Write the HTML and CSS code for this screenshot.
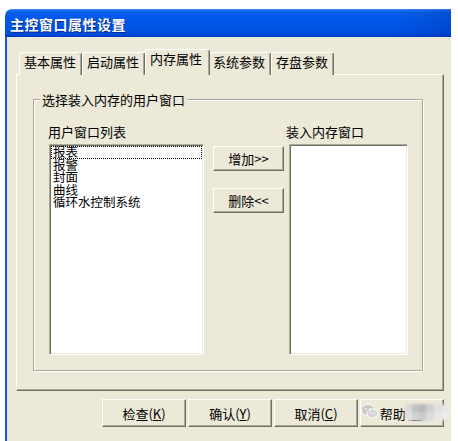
FILE: index.html
```html
<!DOCTYPE html>
<html lang="zh-CN">
<head>
<meta charset="utf-8">
<title>主控窗口属性设置</title>
<link rel="stylesheet" href="styles.css">
</head>
<body>
<div class="window">
  <div class="titlebar"><span class="title">主控窗口属性设置</span></div>
  <div class="client">
    <div class="tabs">
      <div class="tab">基本属性</div>
      <div class="tab">启动属性</div>
      <div class="tab active">内存属性</div>
      <div class="tab">系统参数</div>
      <div class="tab">存盘参数</div>
    </div>
    <div class="panel">
      <div class="group">
        <span class="legend">选择装入内存的用户窗口</span>
        <div class="columns">
          <div class="col col-left">
            <div class="label label-left">用户窗口列表</div>
            <div class="listbox list-left">
              <div class="item focused">报表</div>
              <div class="item">报警</div>
              <div class="item">封面</div>
              <div class="item">曲线</div>
              <div class="item">循环水控制系统</div>
            </div>
          </div>
          <div class="col col-mid">
            <div class="btn small">增加&gt;&gt;</div>
            <div class="btn small">删除&lt;&lt;</div>
          </div>
          <div class="col col-right">
            <div class="label label-right">装入内存窗口</div>
            <div class="listbox list-right"></div>
          </div>
        </div>
      </div>
    </div>
    <div class="footer">
      <div class="btn big">检查(<u>K</u>)</div>
      <div class="btn big">确认(<u>Y</u>)</div>
      <div class="btn big">取消(<u>C</u>)</div>
      <div class="btn big">帮助(<u>H</u>)</div>
    </div>
  </div>
  <div class="wm-icon">
    <svg width="18" height="15" viewBox="0 0 18 15">
      <ellipse cx="7" cy="6" rx="6.5" ry="5.5" fill="#c4c4c4" stroke="#fff" stroke-width="1"/>
      <ellipse cx="11.5" cy="9.5" rx="5.5" ry="4.5" fill="#d6d6d6" stroke="#fff" stroke-width="1"/>
      <circle cx="5" cy="5" r="0.9" fill="#fff"/>
      <circle cx="9" cy="5" r="0.9" fill="#fff"/>
      <circle cx="10" cy="9" r="0.7" fill="#fff"/>
      <circle cx="13" cy="9" r="0.7" fill="#fff"/>
    </svg>
  </div>
  <div class="wm-blob"></div>
</div>
</body>
</html>
```

FILE: styles.css
```css
html, body {
  margin: 0;
  padding: 0;
  background: #ffffff;
}

body {
  font-family: "Noto Sans CJK SC", "Noto Sans", sans-serif;
  font-size: 13px;
  color: #000;
}

.window {
  position: relative;
  margin: 9px 0 0 5px;
  width: 446px;
  height: 432px;
  overflow: hidden;
}

.titlebar {
  height: 28px;
  border-top-left-radius: 7px;
  display: flex;
  align-items: center;
  padding-left: 5px;
  background:
    linear-gradient(to right, rgba(0, 20, 110, 0) 88%, rgba(0, 20, 110, 0.18) 100%),
    linear-gradient(to bottom, #4a98fa 0px, #2176f2 1px, #0a5eea 3px, #0058e8 10px, #0054e4 20px, #004bda 25px, #0042cc 27px, #003cc0 28px);
}

.title {
  color: #ffffff;
  font-size: 14px;
  font-weight: bold;
  line-height: 14px;
  letter-spacing: 0.5px;
  text-shadow: 1px 1px 0 #0a2a8a;
  margin-top: 1px;
}

.client {
  height: 404px;
  background: #ece9d8;
  border-left: 2px solid #1b55e3;
  padding: 12px 0 0 9px;
  box-sizing: border-box;
}

.tabs {
  display: flex;
  align-items: flex-end;
  margin-left: 3px;
  height: 26px;
  margin-bottom: -1px;
}

.tab {
  height: 23px;
  box-sizing: border-box;
  padding: 2px 5px 0 4px;
  line-height: 14px;
  white-space: nowrap;
  background: #ece9d8;
  border-top: 1px solid #ffffff;
  border-left: 1px solid #ffffff;
  border-right: 1px solid #716f64;
  box-shadow: inset -1px 0 0 #aca899;
  border-radius: 3px 3px 0 0;
}

.tab.active {
  position: relative;
  z-index: 1;
  height: 26px;
  padding: 2px 7px 0 4px;
  margin-right: -2px;
}

.panel {
  width: 428px;
  box-sizing: border-box;
  border-top: 1px solid #ffffff;
  border-left: 1px solid #ffffff;
  border-right: 1px solid #716f64;
  border-bottom: 1px solid #716f64;
  box-shadow: inset -1px -1px 0 #aca899;
  padding: 24px 0 19px 16px;
}

.group {
  position: relative;
  width: 390px;
  box-sizing: border-box;
  border: 1px solid #aca899;
  box-shadow: inset 1px 1px 0 #ffffff, 1px 1px 0 #ffffff;
  padding: 25px 0 15px 15px;
}

.legend {
  position: absolute;
  left: 6px;
  top: -7px;
  line-height: 13px;
  padding: 0 2px;
  background: #ece9d8;
}

.columns {
  display: flex;
}

.col {
  display: flex;
  flex-direction: column;
}

.label {
  line-height: 13px;
  height: 13px;
  margin-bottom: 6px;
  white-space: nowrap;
}

.label-left {
  margin-left: -1px;
}

.label-right {
  margin-left: -3px;
}

.listbox {
  height: 211px;
  box-sizing: border-box;
  background: #ffffff;
  border: 1px solid;
  border-color: #aca899 #ffffff #ffffff #aca899;
  box-shadow: inset 1px 1px 0 #716f64, inset -1px -1px 0 #f1efe2;
  padding: 1px 1px 0 1px;
}

.list-left {
  width: 155px;
}

.list-right {
  width: 119px;
}

.item {
  height: 12.5px;
  line-height: 12.5px;
  font-size: 12.5px;
  padding-left: 2px;
  white-space: nowrap;
}

.item.focused {
  outline: 1px dotted #000;
  outline-offset: -1px;
}

.col-mid {
  margin-left: 9px;
  padding-top: 21px;
  gap: 17px;
}

.col-right {
  margin-left: 5px;
}

.btn {
  box-sizing: border-box;
  display: flex;
  align-items: center;
  justify-content: center;
  background: #ece9d8;
  border: 1px solid;
  border-color: #ffffff #716f64 #716f64 #ffffff;
  box-shadow: inset -1px -1px 0 #aca899;
  white-space: nowrap;
  line-height: 13px;
}

.btn.small {
  width: 71px;
  height: 25px;
}

.footer {
  display: flex;
  gap: 2px;
  margin: 8px 0 0 86px;
}

.btn.big {
  width: 84px;
  height: 28px;
}

.btn u {
  text-decoration: underline;
  text-underline-offset: 1px;
}

.wm-icon {
  position: absolute;
  left: 356px;
  top: 395px;
  width: 18px;
  height: 15px;
  opacity: 0.9;
}

.wm-blob {
  position: absolute;
  left: 400px;
  top: 395px;
  width: 44px;
  height: 17px;
  border-radius: 4px 9px 9px 4px;
  filter: blur(0.8px);
  background:
    linear-gradient(to bottom, rgba(255,255,255,0) 0 8px, rgba(255,255,255,0.25) 8px 17px),
    linear-gradient(to right, #d9d9d9 0 7px, #c2c2c2 7px 14px, #b9b9b9 14px 21px, #cfcfcf 21px 29px, #dedede 29px 37px, #e6e6e6 37px);
}
```
